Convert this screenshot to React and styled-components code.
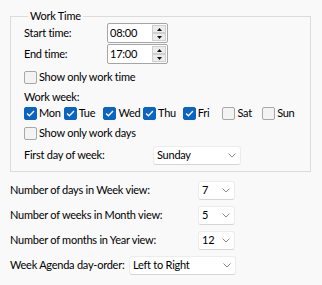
import React from "react";
import styled, { createGlobalStyle } from "styled-components";

const GlobalStyle = createGlobalStyle`
  html, body { margin: 0; padding: 0; background: #f9f9f9; }
  body {
    font-family: Lato, "Noto Sans", sans-serif;
    font-size: 11px;
    letter-spacing: -0.25px;
    color: #000;
  }
`;

const Page = styled.div`
  width: 322px;
  height: 285px;
  box-sizing: border-box;
  padding: 9px 0 0 10px;
  display: flex;
  flex-direction: column;
`;

const Group = styled.fieldset`
  margin: 0;
  padding: 0 0 6px 13px;
  width: 301px;
  box-sizing: border-box;
  border: 1px solid #dcdcdc;
  display: flex;
  flex-direction: column;
`;

const Legend = styled.legend`
  margin-left: 4px;
  padding: 0 2px;
  line-height: 14px;
`;

const Row = styled.div`
  display: flex;
  align-items: center;
  height: ${(p) => p.$h || 20}px;
  margin-top: ${(p) => p.$mt || 0}px;
`;

const Label = styled.span`
  width: ${(p) => p.$w}px;
  flex: none;
  white-space: nowrap;
  line-height: 16px;
`;

const SpinBox = styled.div`
  width: 61px;
  height: 20px;
  box-sizing: border-box;
  border: 1px solid #a5a5a5;
  border-radius: 2px;
  background: #fff;
  display: flex;
  align-items: center;
  padding: 0 1px 0 2px;
`;

const SpinText = styled.span`
  flex: 1;
  line-height: 16px;
`;

const SpinButtons = styled.div`
  width: 14px;
  height: 16px;
  display: flex;
  flex-direction: column;
`;

const SpinBtn = styled.div`
  flex: 1;
  box-sizing: border-box;
  border: 1px solid #cfcfcf;
  background: #ececec;
  display: flex;
  align-items: center;
  justify-content: center;
`;

const Tri = ({ down }) => (
  <svg width="5" height="3" viewBox="0 0 5 3">
    <path d={down ? "M0 0 H5 L2.5 3 Z" : "M0 3 H5 L2.5 0 Z"} fill="#111" />
  </svg>
);

const Spin = ({ value }) => (
  <SpinBox>
    <SpinText>{value}</SpinText>
    <SpinButtons>
      <SpinBtn>
        <Tri />
      </SpinBtn>
      <SpinBtn>
        <Tri down />
      </SpinBtn>
    </SpinButtons>
  </SpinBox>
);

const CheckWrap = styled.label`
  display: flex;
  align-items: center;
  gap: 2px;
  white-space: nowrap;
  line-height: 16px;
`;

const Box = styled.span`
  width: 13px;
  height: 13px;
  box-sizing: border-box;
  border-radius: 2px;
  border: 1px solid ${(p) => (p.$on ? "#0a64c2" : "#a8a8a8")};
  background: ${(p) => (p.$on ? "#0a64c2" : "#f3f3f3")};
  display: flex;
  align-items: center;
  justify-content: center;
  flex: none;
`;

const Check = ({ on, children }) => (
  <CheckWrap>
    <Box $on={on}>
      {on && (
        <svg width="9" height="7" viewBox="0 0 9 7">
          <path d="M1 3.5 L3.4 5.8 L8 1" fill="none" stroke="#fff" strokeWidth="1.3" />
        </svg>
      )}
    </Box>
    {children}
  </CheckWrap>
);

const Days = styled.div`
  display: grid;
  grid-template-columns: repeat(7, 39.7px);
  height: 14px;
  align-items: center;
`;

const Combo = styled.div`
  width: ${(p) => p.$w}px;
  height: 19px;
  box-sizing: border-box;
  background: #fff;
  border: 1px solid #ececec;
  border-bottom-color: #d6d6d6;
  border-radius: 3px;
  display: flex;
  align-items: center;
  padding: 0 4px 0 3px;
`;

const ComboText = styled.span`
  flex: 1;
  line-height: 16px;
  white-space: nowrap;
`;

const Chevron = () => (
  <svg width="8" height="5" viewBox="0 0 8 5">
    <path d="M0.5 0.5 L4 4 L7.5 0.5" fill="none" stroke="#8a8a8a" strokeWidth="1" />
  </svg>
);

const Dropdown = ({ w, value }) => (
  <Combo $w={w}>
    <ComboText>{value}</ComboText>
    <Chevron />
  </Combo>
);

const Bottom = styled.div`
  display: flex;
  flex-direction: column;
  gap: 5px;
  margin-top: 8px;
`;

const days = [
  ["Mon", true],
  ["Tue", true],
  ["Wed", true],
  ["Thu", true],
  ["Fri", true],
  ["Sat", false],
  ["Sun", false],
];

export default function App() {
  return (
    <>
      <GlobalStyle />
      <Page>
        <Group>
          <Legend>Work Time</Legend>
          <Row $h={20}>
            <Label $w={83}>Start time:</Label>
            <Spin value="08:00" />
          </Row>
          <Row $h={20} $mt={1}>
            <Label $w={83}>End time:</Label>
            <Spin value="17:00" />
          </Row>
          <Row $h={16} $mt={5}>
            <Check>Show only work time</Check>
          </Row>
          <Row $h={16} $mt={4}>
            <Label>Work week:</Label>
          </Row>
          <Days>
            {days.map(([d, on]) => (
              <Check key={d} on={on}>
                {d}
              </Check>
            ))}
          </Days>
          <Row $h={16} $mt={6}>
            <Check>Show only work days</Check>
          </Row>
          <Row $h={20} $mt={4}>
            <Label $w={129}>First day of week:</Label>
            <Dropdown w={88} value="Sunday" />
          </Row>
        </Group>
        <Bottom>
          <Row>
            <Label $w={188}>Number of days in Week view:</Label>
            <Dropdown w={37} value="7" />
          </Row>
          <Row>
            <Label $w={188}>Number of weeks in Month view:</Label>
            <Dropdown w={37} value="5" />
          </Row>
          <Row>
            <Label $w={188}>Number of months in Year view:</Label>
            <Dropdown w={37} value="12" />
          </Row>
          <Row>
            <Label $w={119}>Week Agenda day-order:</Label>
            <Dropdown w={107} value="Left to Right" />
          </Row>
        </Bottom>
      </Page>
    </>
  );
}
